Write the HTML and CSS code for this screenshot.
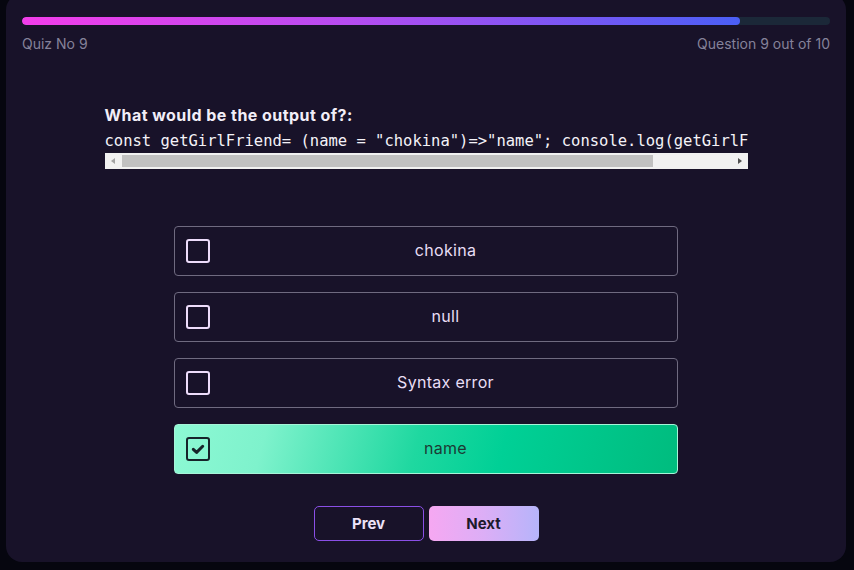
FILE: index.html
```html
<!DOCTYPE html>
<html>
<head>
<meta charset="utf-8">
<link rel="stylesheet" href="styles.css">
</head>
<body>
<div class="card">
  <div class="progress"><div class="progress-fill"></div></div>
  <div class="meta">
    <span class="quiz-no">Quiz No 9</span>
    <span class="q-count">Question 9 out of 10</span>
  </div>
  <div class="question">
    <h2 class="q-title">What would be the output of?:</h2>
    <pre class="code">const getGirlFriend= (name = "chokina")=&gt;"name"; console.log(getGirlFriend())</pre>
    <div class="scrollbar">
      <span class="sb-btn sb-left"></span>
      <span class="sb-track"><span class="sb-thumb"></span></span>
      <span class="sb-btn sb-right"></span>
    </div>
  </div>
  <div class="options">
    <div class="option"><span class="check"></span><span class="opt-text">chokina</span></div>
    <div class="option"><span class="check"></span><span class="opt-text">null</span></div>
    <div class="option"><span class="check"></span><span class="opt-text">Syntax error</span></div>
    <div class="option selected"><span class="check"><svg viewBox="0 0 20 20" width="20" height="20"><path d="M5.3 10.3 L8.6 13.4 L14.7 7.3" fill="none" stroke="#17242a" stroke-width="3" stroke-linecap="round" stroke-linejoin="round"/></svg></span><span class="opt-text">name</span></div>
  </div>
  <div class="actions">
    <button class="btn prev">Prev</button>
    <button class="btn next">Next</button>
  </div>
</div>
</body>
</html>
```
FILE: styles.css
```css
html, body {
  margin: 0;
  padding: 0;
  background: #06060f;
  overflow: hidden;
}
body {
  width: 854px;
  height: 570px;
  font-family: Inter, "Noto Sans", sans-serif;
}
.card {
  box-sizing: border-box;
  margin: -6px 0 0 6px;
  width: 840px;
  height: 568px;
  background: #181229;
  border-radius: 16px;
  padding: 23px 16px 0;
}
.progress {
  height: 8px;
  border-radius: 4px;
  background: #1b2838;
  overflow: hidden;
}
.progress-fill {
  width: 88.8%;
  height: 100%;
  border-radius: 4px;
  background: linear-gradient(90deg, #f23de9 0%, #b74cf0 45%, #4a5ff6 100%);
}
.meta {
  margin-top: 10px;
  display: flex;
  justify-content: space-between;
  font-size: 14px;
  line-height: 18px;
  color: #85829a;
}
.question {
  width: 643px;
  margin: 52px auto 0;
}
.q-title {
  margin: 0;
  font-size: 16px;
  line-height: 20px;
  font-weight: 700;
  letter-spacing: 0.45px;
  color: #f2eef8;
}
.code {
  margin: 6px 0 0;
  padding: 0 0 2px;
  font-family: "DejaVu Sans Mono", "Liberation Mono", monospace;
  font-size: 15.5px;
  line-height: 20px;
  color: #f4f2f8;
  white-space: pre;
  overflow: hidden;
}
.scrollbar {
  display: flex;
  height: 16px;
  background: #f1f1f1;
}
.sb-btn {
  width: 17px;
  position: relative;
}
.sb-btn::after {
  content: "";
  position: absolute;
  top: 5px;
  width: 0;
  height: 0;
  border-top: 3.5px solid transparent;
  border-bottom: 3.5px solid transparent;
}
.sb-left::after {
  left: 6px;
  border-right: 4px solid #a3a3a3;
}
.sb-right::after {
  left: 7px;
  border-left: 4px solid #505050;
}
.sb-track {
  flex: 1;
  padding: 2px 0;
}
.sb-thumb {
  display: block;
  width: 531px;
  height: 12px;
  background: #c1c1c1;
}
.options {
  width: 504px;
  margin: 57px auto 0;
  display: flex;
  flex-direction: column;
  gap: 16px;
}
.option {
  box-sizing: border-box;
  height: 50px;
  border: 1px solid #6f6a80;
  border-radius: 4px;
  display: flex;
  align-items: center;
  padding-left: 11px;
  color: #e8def5;
  font-size: 16px;
  letter-spacing: 0.3px;
}
.check {
  box-sizing: border-box;
  width: 24px;
  height: 24px;
  border: 2px solid #eddcfb;
  border-radius: 3px;
  display: flex;
  align-items: center;
  justify-content: center;
  flex: none;
}
.opt-text {
  flex: 1;
  text-align: center;
  margin-left: 4px;
  line-height: 20px;
  margin-top: -2px;
}
.option.selected {
  border-color: #a6f5d8;
  background: linear-gradient(105deg, #8df9d4 0%, #7ef2cc 18%, #1fd8a0 48%, #00d096 65%, #00bc7e 100%);
  color: #1c3a34;
}
.option.selected .check {
  border-color: #16232a;
}
.actions {
  margin-top: 32px;
  display: flex;
  justify-content: center;
  gap: 5px;
}
.btn {
  box-sizing: border-box;
  width: 110px;
  height: 35px;
  border-radius: 5px;
  font-family: Inter, sans-serif;
  font-size: 15px;
  font-weight: 700;
  cursor: pointer;
}
.prev {
  background: transparent;
  border: 1px solid #8a4fe6;
  color: #ece2f8;
}
.next {
  border: none;
  background: linear-gradient(90deg, #f6a8f2 0%, #dcaef6 50%, #b6b4fa 100%);
  color: #1d1a2c;
}
```
